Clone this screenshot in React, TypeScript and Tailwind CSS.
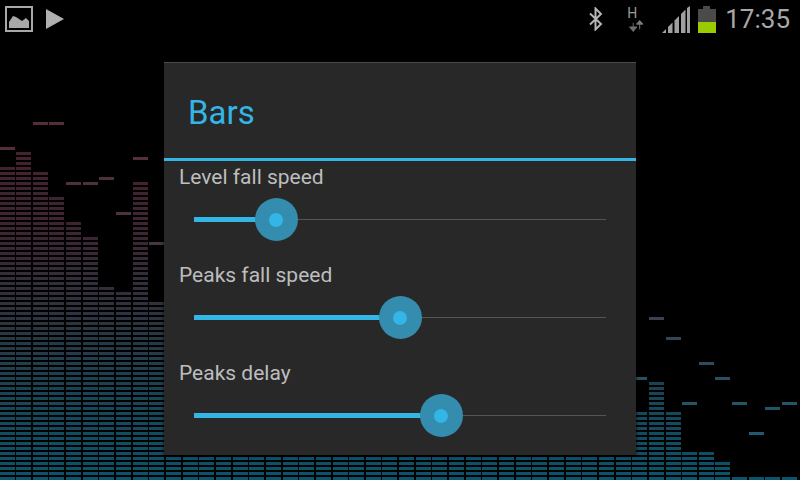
const heights: [number, number][] = [
  [168, 148], [153, 153], [173, 123], [198, 123], [223, 183], [238, 183], [288, 178], [293, 213], [183, 158], [303, 243],
];
const right: [number, number][] = [
  [413, 378], [383, 318], [413, 338], [453, 403], [453, 363], [463, 378], [478, 403], [478, 433], [478, 408], [478, 403],
];

function barColor(y: number, peak = false): string {
  const stops: [number, number[]][] = [
    [120, [72, 32, 44]],
    [240, [58, 38, 50]],
    [320, [44, 52, 64]],
    [400, [22, 70, 88]],
    [480, [10, 84, 108]],
  ];
  let c = stops[stops.length - 1][1];
  for (let i = 0; i < stops.length - 1; i++) {
    const [a, ca] = stops[i];
    const [b, cb] = stops[i + 1];
    if (y >= a && y <= b) {
      const t = (y - a) / (b - a);
      c = ca.map((v, k) => v + (cb[k] - v) * t);
    }
  }
  const add = peak ? 14 : 0;
  return `rgb(${Math.round(c[0] + add)},${Math.round(c[1] + add)},${Math.round(c[2] + add)})`;
}

function Visualizer() {
  const rects: React.ReactNode[] = [];
  for (let i = 0; i < 48; i++) {
    const x = Math.floor(i * 16.65);
    const w = 15;
    let top = 453;
    let peak = 0;
    if (i < 10) [top, peak] = heights[i];
    else if (i >= 38) [top, peak] = right[i - 38];
    for (let y = 478; y >= top - 1; y -= 5) {
      rects.push(<rect key={`${i}-${y}`} x={x} y={y - 1} width={w} height={3} fill={barColor(y)} />);
    }
    if (peak && peak < top) {
      rects.push(<rect key={`p${i}`} x={x} y={peak - 1} width={w} height={3} fill={barColor(peak, true)} />);
    }
  }
  return (
    <svg className="absolute inset-0" width={800} height={480} viewBox="0 0 800 480">
      {rects}
    </svg>
  );
}

function Slider({ label, pos }: { label: string; pos: number }) {
  return (
    <div className="h-[98px] flex flex-col">
      <div className="h-[36px] pl-[15px] pt-[1px] text-[21px] leading-[30px] text-[#bdbdbd]">{label}</div>
      <div className="relative h-[44px] ml-[30px] mr-[30px] flex items-center">
        <div className="h-[5px] bg-[#33b5e5]" style={{ width: pos }} />
        <div className="h-px flex-1 bg-[#555555]" />
        <div
          className="absolute top-[1px] w-[43px] h-[43px] -ml-[21.5px] rounded-full bg-[#348cae] flex items-center justify-center"
          style={{ left: pos }}
        >
          <div className="w-[14px] h-[14px] rounded-full bg-[#33b5e5]" />
        </div>
      </div>
    </div>
  );
}

export default function App() {
  return (
    <div className="relative w-[800px] h-[480px] bg-black overflow-hidden font-['Roboto',sans-serif]">
      <Visualizer />
      <div className="relative h-[38px] flex items-center pl-[5px] pr-[10px]">
        <svg width="28" height="26" viewBox="0 0 28 26">
          <rect x="1" y="1" width="26" height="24" fill="none" stroke="#a8a8a8" strokeWidth="2" />
          <path d="M4 22V16L8 10L11 11L14 13L17 15L21 12L24 15V22Z" fill="#a8a8a8" />
        </svg>
        <svg width="19" height="20" viewBox="0 0 19 20" className="ml-[13px]">
          <path d="M0 0L18 10L0 20Z" fill="#b0b0b0" />
        </svg>
        <div className="flex-1" />
        <svg width="16" height="24" viewBox="0 0 16 24">
          <path d="M2 6.5L13 17L7.5 22.5V1.5L13 7L2 17.5" fill="none" stroke="#b4b4b4" strokeWidth="2" />
        </svg>
        <div className="ml-[22px] w-[20px] h-[26px] flex flex-col items-start pl-[1px]">
          <span className="text-[14px] leading-[14px] text-[#9a9a9a]">H</span>
          <svg width="18" height="13" viewBox="0 0 18 13">
            <path d="M6 3V8M2 7.5H10L6 12.5Z" fill="#6e6e6e" stroke="#6e6e6e" />
            <path d="M13 10V4M9.5 4.5H16.5L13 0.5Z" fill="#7c7c7c" stroke="#7c7c7c" />
          </svg>
        </div>
        <svg width="29" height="27" viewBox="0 0 29 27" className="ml-[16px]">
          <path d="M0 27L4 23V27Z" fill="#a0a0a0" />
          <path d="M6 21L10.5 16.5V27H6Z" fill="#a0a0a0" />
          <path d="M12.5 14.5L17 10V27H12.5Z" fill="#a0a0a0" />
          <path d="M19 8L23.5 3.5V27H19Z" fill="#a0a0a0" />
          <path d="M25 2L28 0V27H25Z" fill="#a0a0a0" />
        </svg>
        <div className="ml-[6px] w-[19px] h-[27px] flex flex-col items-center">
          <div className="w-[7px] h-[3px] bg-[#4a4a4a]" />
          <div className="w-[18px] h-[13px] bg-[#4a4a4a]" />
          <div className="w-[18px] h-[11px] bg-[#99cc00]" />
        </div>
        <span className="ml-[9px] text-[26px] leading-[38px] text-[#a8a8a8]">17:35</span>
      </div>
      <div className="relative ml-[164px] mt-[24px] w-[472px] h-[393px] bg-[#282828] border-t border-[#4a4a4a] shadow-[0_0_3px_rgba(0,0,0,0.8)]">
        <div className="h-[95px] pl-[24px] pt-[4px] flex items-center text-[33px] text-[#33b5e5]">Bars</div>
        <div className="h-[3px] bg-[#33b5e5]" />
        <Slider label="Level fall speed" pos={82} />
        <Slider label="Peaks fall speed" pos={206} />
        <Slider label="Peaks delay" pos={247} />
      </div>
    </div>
  );
}
